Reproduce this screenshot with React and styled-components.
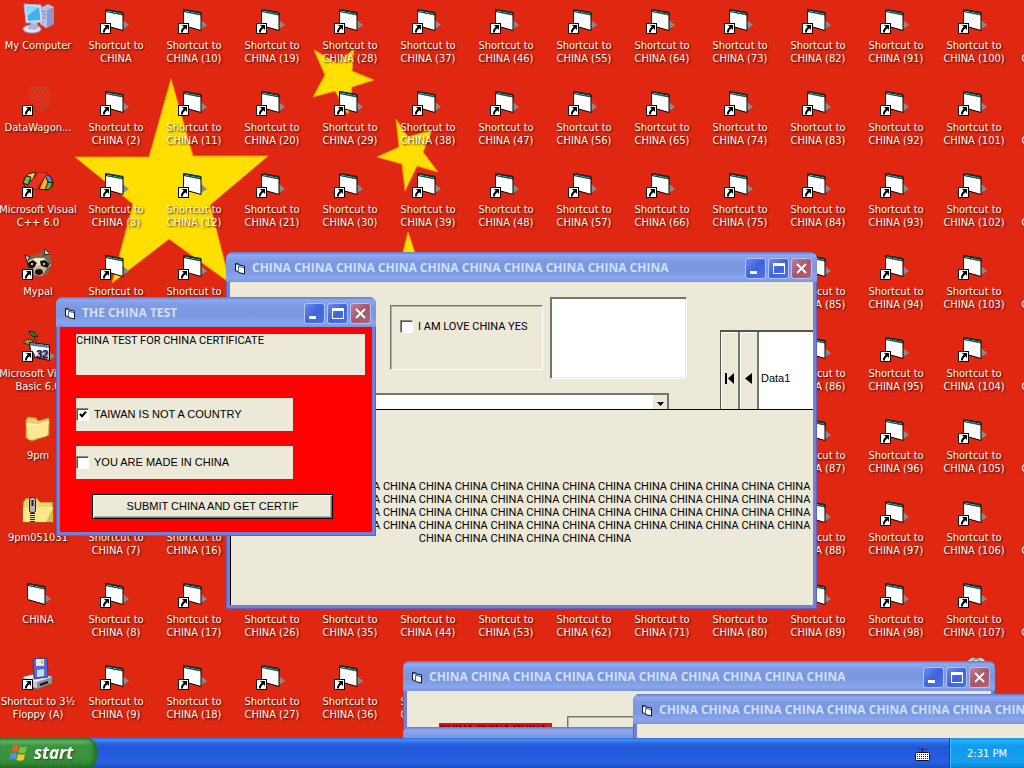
import React from "react";
import styled, { createGlobalStyle, css } from "styled-components";

const face = "#ece9d8";
const uiFont = `"Liberation Sans", Arial, sans-serif`;
const shellFont = `"DejaVu Sans Condensed", Tahoma, sans-serif`;
const captionFont = `"Open Sans", "Trebuchet MS", sans-serif`;

const GlobalStyle = createGlobalStyle`
  *, *::before, *::after { box-sizing: border-box; }
  body { margin: 0; }
  button, input, select { font: inherit; margin: 0; padding: 0; }
`;

/* ---------- shell ---------- */

const Screen = styled.div`
  height: 100vh;
  display: flex;
  flex-direction: column;
  overflow: hidden;
  font: 11px/13px ${shellFont};
`;

const Desktop = styled.main`
  position: relative;
  flex: 1;
  min-height: 0;
  overflow: hidden;
  background: #df2712;
`;

const Wallpaper = styled.svg`
  position: absolute;
  left: 0;
  top: 0;
  fill: #ffdf00;
  stroke: #f59a0c;
  stroke-width: 1;
`;

const IconGrid = styled.ul`
  position: relative;
  margin: 0 0 0 -1px;
  padding: 0;
  list-style: none;
  display: grid;
  grid-template-rows: repeat(9, 82px);
  grid-auto-columns: 78px;
  grid-auto-flow: column;
`;

const IconCell = styled.li`
  display: flex;
  flex-direction: column;
  align-items: center;
  gap: 5px;
  padding-top: 2px;
  color: #fffdf0;
  text-align: center;
  white-space: pre;
  text-shadow: 1px 1px 2px rgba(40, 0, 0, 0.9);
`;

/* ---------- windows ---------- */

const Frame = styled.section`
  position: absolute;
  left: ${(p) => p.$x}px;
  top: ${(p) => p.$y}px;
  width: ${(p) => p.$w}px;
  height: ${(p) => p.$h}px;
  display: flex;
  flex-direction: column;
  padding: 0 4px 4px;
  overflow: hidden;
  border-radius: 7px 7px 0 0;
  background: #7480d6;
  box-shadow: inset 1px 0 #5e62c0, inset -1px -1px #5e62c0;
  color: #000;
  font: 11px/13px ${uiFont};
`;

const TitleBar = styled.header`
  flex: none;
  height: 30px;
  margin: 0 -4px;
  padding: 2px 5px 0 8px;
  display: flex;
  align-items: center;
  gap: 6px;
  background: linear-gradient(#6478cc 0, #8ca8ee 3px, #7d99e2 9px, #7a96df 18px, #88a6ec 26px, #7c93de 30px);
`;

const Caption = styled.h1`
  flex: 1;
  min-width: 0;
  margin: 0;
  overflow: hidden;
  white-space: nowrap;
  color: #cfe0fa;
  font: bold 12px/16px ${captionFont};
`;

const CaptionButtons = styled.div`
  display: flex;
  gap: 2px;
`;

const CaptionButton = styled.button`
  width: 21px;
  height: 21px;
  display: grid;
  place-items: center;
  border: 1px solid #b4c4f2;
  border-radius: 3px;
  background: ${(p) =>
    p.$close
      ? "linear-gradient(135deg, #c08098, #a8546a 50%, #b06478)"
      : "linear-gradient(135deg, #6c8cea, #3f63dc 50%, #4a74e6)"};
`;

const Client = styled.div`
  flex: 1;
  min-height: 0;
  display: flex;
  flex-direction: column;
  overflow: hidden;
  background: ${face};
`;

/* ---------- controls ---------- */

const CheckLabel = styled.label`
  display: flex;
  align-items: center;
  gap: 5px;
  white-space: nowrap;
  ${(p) =>
    p.$panel &&
    css`
      width: 217px;
      height: 33px;
      background: ${face};
    `}
`;

const CheckBox = styled.input`
  appearance: none;
  position: relative;
  flex: none;
  width: 13px;
  height: 13px;
  border: 1px solid;
  border-color: #8a8878 #fff #fff #8a8878;
  background: #fff;
  box-shadow: inset 1px 1px #55534a;

  &:checked::after {
    content: "";
    position: absolute;
    left: 4px;
    top: 1px;
    width: 4px;
    height: 7px;
    border: solid #000;
    border-width: 0 2px 2px 0;
    transform: rotate(42deg);
  }
`;

/* THE CHINA TEST */

const TestForm = styled.form`
  flex: 1;
  display: flex;
  flex-direction: column;
  align-items: flex-start;
  gap: 15px;
  padding: 7px 7px 0 16px;
  background: #f00;
`;

const Notice = styled.div`
  align-self: stretch;
  height: 41px;
  margin-bottom: 8px;
  background: ${face};
  font-family: Roboto, ${uiFont};
`;

const SubmitButton = styled.button`
  width: 241px;
  height: 25px;
  margin-left: 16px;
  border: 1px solid #000;
  background: ${face};
  box-shadow: inset 1px 1px #fff, inset -1px -1px #77756a, inset -2px -2px #b5b2a2;
`;

/* main CHINA form */

const UpperPane = styled.div`
  flex: none;
  height: 127px;
  display: flex;
  align-items: flex-start;
  overflow: hidden;
`;

const InputColumn = styled.div`
  width: 457px;
  padding: 15px 0 0 70px;
`;

const InputRow = styled.div`
  display: flex;
  align-items: flex-start;
  justify-content: flex-end;
  gap: 7px;
`;

const GroupBox = styled.fieldset`
  min-width: 0;
  width: 153px;
  height: 65px;
  margin: 8px 0 0;
  padding: 14px 9px;
  border: 1px solid;
  border-color: #77756a #fff #fff #77756a;
  box-shadow: inset 1px 1px #b5b2a2;
  font-family: Roboto, ${uiFont};
`;

const TextBox = styled.input`
  width: 137px;
  height: 82px;
  border: 1px solid;
  border-color: #77756a #fff #fff #77756a;
  background: #fff;
  box-shadow: inset 1px 1px #77756a, inset -1px -1px #ece9d8;
`;

const Combo = styled.div`
  position: relative;
  margin: 14px 18px 0 0;
`;

const ComboSelect = styled.select`
  display: block;
  appearance: none;
  width: 100%;
  height: 22px;
  border: 2px solid;
  border-color: #77756a #77756a #fff #77756a;
  border-radius: 0;
  background: linear-gradient(to left, ${face} 14px, #fff 14px);
`;

const ComboArrow = styled.svg`
  position: absolute;
  right: 5px;
  top: 9px;
  pointer-events: none;
`;

const DataControl = styled.div`
  flex: 1;
  height: 95px;
  margin: 48px 0 0 33px;
  display: flex;
  align-items: stretch;
  border: solid #55534a;
  border-width: 2px 0 0 1px;
  background: #fff;
`;

const DataButton = styled.button`
  width: 19px;
  display: grid;
  place-items: center;
  border: 0;
  border-right: 2px solid #77756a;
  background: ${face};
  box-shadow: inset 1px 1px #fff;
`;

const DataName = styled.span`
  align-self: center;
  padding-left: 2px;
`;

const PictureBox = styled.div`
  flex: 1;
  border: solid #000;
  border-width: 1px 0 0 1px;
  padding: 70px 0 0;
`;

const Slogan = styled.p`
  width: 582px;
  margin: 0 0 0 3px;
  text-align: center;
  font-family: Roboto, ${uiFont};
`;

/* lower windows */

const LowerRow = styled.div`
  display: flex;
  gap: 15px;
  padding: 25px 0 0 32px;
`;

const RedLabel = styled.div`
  width: 113px;
  height: 40px;
  margin-top: 7px;
  background: #d3161c;
`;

const GroovePanel = styled.div`
  width: 160px;
  height: 65px;
  border: 1px solid;
  border-color: #77756a #fff #fff #77756a;
  box-shadow: inset 1px 1px #b5b2a2;
`;

/* ---------- taskbar ---------- */

const Taskbar = styled.footer`
  flex: none;
  height: 30px;
  display: flex;
  align-items: stretch;
  background: linear-gradient(#2e6be0 0, #428df5 2px, #2c68e4 5px, #2257d8 9px, #2460e0 24px, #1f4fc0 30px);
`;

const StartButton = styled.button`
  width: 97px;
  display: flex;
  align-items: center;
  gap: 4px;
  padding: 0 0 1px 9px;
  border: 0;
  border-radius: 0 10px 10px 0;
  background: linear-gradient(#2f7a30 0, #66b468 3px, #3c9440 8px, #37923a 22px, #2a7429 30px);
  box-shadow: inset -3px 0 4px #226a24;
  color: #fff;
  font: italic bold 17px/22px ${captionFont};
  text-shadow: 1px 1px 2px #1c4a1c;
`;

const LanguageBar = styled.div`
  margin-left: auto;
  display: flex;
  align-items: center;
  padding: 3px 19px 0 0;
`;

const Tray = styled.div`
  width: 75px;
  display: grid;
  place-items: center;
  border-left: 1px solid #0b3aa0;
  background: linear-gradient(#1a8fe8 0, #22b4f6 3px, #119aee 8px, #12a0ee 24px, #0f80d0 30px);
  box-shadow: inset 1px 0 #3cc0f8;
  color: #fff;
`;

/* ---------- drawings ---------- */

const ShortcutArrow = () => (
  <g>
    <rect x="0.5" y="21.5" width="10" height="10" fill="#fff" stroke="#000" />
    <path d="M4 23h5v5l-1.700-1.700C6 27.500 5 28.500 4.800 30.500H3C2.800 28 4 26.300 5.700 24.700z" fill="#000" />
  </g>
);

const FormGlyph = () => (
  <g>
    <path d="M23 18l6 5-6 4z" fill="#8c8c8c" />
    <path d="M5.500 7.500L23 10.500v18L5.500 23.500z" fill="#fff" stroke="#000" />
    <path d="M5.500 7L23 10.500v3L5.500 10z" fill="#10302c" />
    <path d="M7 9l15 3" stroke="#3fae8c" strokeWidth="1" strokeDasharray="5 1" />
  </g>
);

const glyphs = {
  form: <FormGlyph />,
  computer: (
    <g>
      <path d="M18 6l8-4 6 3v17l-8 4-6-4z" fill="#b9bfe4" />
      <path d="M25 8l7-3v17l-7 4z" fill="#8f96c8" />
      <path d="M19 9l5 1M19 12l5 1M19 15l5 1" stroke="#7d84b8" />
      <path d="M2 2l17 1 2 17-17 1z" fill="#dfe3f4" stroke="#a3a9d0" />
      <path d="M4 4l13 1 1.500 13L6 19z" fill="#3fb2f2" />
      <path d="M4 4l13 1-12 9z" fill="#90d8fb" />
      <path d="M9 20h6l1 4H8z" fill="#bcc2de" />
      <ellipse cx="10" cy="27" rx="9" ry="4" fill="#dfe3f2" stroke="#9aa0c8" />
      <ellipse cx="11" cy="25.500" rx="5" ry="2" fill="#aab2d8" />
    </g>
  ),
  dotted: (
    <g fill="none" stroke="#b85c48" strokeWidth="1" strokeDasharray="1 1">
      <path d="M8 4h18M6 6h22M7 8h22M5 10h23M8 12h21M7 14h22M9 16h20M10 18h17M13 20h15M14 22h12M16 24h10M15 26h7" />
    </g>
  ),
  vcpp: (
    <g stroke="#201008" strokeWidth="1">
      <path d="M1 17l5-9 8-2-4 9z" fill="#ffcf3d" />
      <path d="M1 17l5 8 5-7-3-6z" fill="#3a78d8" />
      <path d="M4 10l5 1-3 8-5-2z" fill="#6cc23c" />
      <path d="M17 23l6-13 6 3 2 6-6 5z" fill="#f6b52c" />
      <path d="M22 7l7 4 2 6-5-1z" fill="#4a8ae0" />
      <path d="M26 16l5 1-3 6-5 1z" fill="#5cb83c" />
      <path d="M5 20L17 6l9 1L14 24z" fill="#e8341c" stroke="#a01808" />
    </g>
  ),
  raccoon: (
    <g>
      <path d="M3 7l6 1 9-3 5-4 5 4 2 12-5 9-11 3-8-8z" fill="#7b664e" />
      <path d="M3 7l5 2-3 5zM23 1l5 5-6 1z" fill="#d8cdb6" stroke="#2c2018" />
      <path d="M6 13l7-3 9 0 7 7-6 4-9-2-8 1z" fill="#efe6d2" />
      <path d="M5 15l6-3 4 3-3 5-6 0zM18 13l5-1 5 4-3 4-6-2z" fill="#171310" />
      <path d="M11 20l6-3 8 3-5 8-7-1z" fill="#c9b795" />
      <ellipse cx="17" cy="24" rx="4" ry="3" fill="#1b1512" />
      <circle cx="10" cy="16" r="1" fill="#fff" />
      <circle cx="22" cy="16" r="1" fill="#fff" />
    </g>
  ),
  vb: (
    <g>
      <path d="M6 1l6 1 4 5-6-1z" fill="#2f7a34" stroke="#0f3010" />
      <path d="M1 12l5-3 6 2-5 4z" fill="#9a9a44" stroke="#30300c" />
      <path d="M12 7l3 5" stroke="#30300c" />
      <path d="M27 22l6 4-5 4z" fill="#8c8c8c" />
      <path d="M7.500 12.500L27.500 15v15.500L9 26z" fill="#fff" stroke="#000" />
      <path d="M8 13l19 2.500v2.500L8 15.500z" fill="#3c8c9c" />
      <path d="M10 22c4 0 4 8 0 9z" fill="#902040" />
      <text x="14" y="28" fontFamily="Liberation Sans, sans-serif" fontWeight="bold" fontSize="11" fill="#101878">
        32
      </text>
    </g>
  ),
  folder: (
    <g>
      <path d="M4 8l2-3 8 1 2 3 11-3v17L10 29 4 26z" fill="#f2cc62" stroke="#b98f2c" />
      <path d="M4 11l12 1 11-3-2 15-18 4z" fill="#fde793" />
      <path d="M5 12l11 1 10-3" stroke="#fff8cc" fill="none" />
    </g>
  ),
  zip: (
    <g>
      <path d="M1 8l3-4h11l3 4h13v20H1z" fill="#f3d56a" stroke="#8c6c1c" />
      <path d="M1 13h30v15H1z" fill="#fbe78c" />
      <path d="M24 28l7-14v14z" fill="#dcb848" />
      <rect x="7.500" y="3.500" width="6" height="15" rx="2" fill="#b4b4b4" stroke="#202020" />
      <path d="M10.500 6v6" stroke="#222" strokeWidth="2" />
      <path d="M10.500 19v10" stroke="#222" strokeWidth="5" strokeDasharray="1 1" />
    </g>
  ),
  floppy: (
    <g>
      <path d="M1 19l17-5 12 5v6l-15 6-14-5z" fill="#c9c9d2" stroke="#5c5c66" />
      <path d="M1 19l14 5 15-5-12-4z" fill="#efeff4" />
      <path d="M15 24v7l15-6v-6z" fill="#8f8f99" />
      <path d="M18 27l8-3" stroke="#111" strokeWidth="2" />
      <circle cx="28" cy="24" r="1" fill="#4ce04c" />
      <path d="M11 1l14-1 1 19-14 2z" fill="#5a68cc" stroke="#343c8c" />
      <path d="M14 1h8v7h-8z" fill="#e2e6f6" />
      <path d="M19 2h2v4h-2z" fill="#d8d020" />
      <path d="M15 12l7-1v7l-7 1z" fill="#bfe0f4" />
    </g>
  ),
  bin: (
    <g>
      <path d="M10 3l4-3 5 1 4-1 3 2 2 3v19H10z" fill="#dfe6ea" stroke="#a8b0b4" />
      <path d="M14 3l4-2 5 2" stroke="#5a8c78" fill="none" />
    </g>
  ),
};

const DesktopGlyph = ({ kind, shortcut }) => (
  <svg width="32" height="32" viewBox="0 0 32 32" overflow="visible" fill="none" aria-hidden="true">
    {glyphs[kind]}
    {shortcut && <ShortcutArrow />}
  </svg>
);

const WindowGlyph = () => (
  <svg width="12" height="13" viewBox="0 0 12 13" fill="none" aria-hidden="true">
    <path d="M1.500 1.500L5 2v1l5.500 1v8L4.500 10.500v-1l-3-.5z" fill="#fff" stroke="#0c1434" />
    <path d="M2 2.500l3 .5M5 4.500l5 1" stroke="#1c6c80" />
    <path d="M4.500 4v6" stroke="#5c6c88" />
  </svg>
);

const FlagLogo = () => (
  <svg width="21" height="20" viewBox="0 0 21 20" aria-hidden="true">
    <path d="M4 3c3-1.500 4-1 6 0L8.500 9C6.500 8 5 8 2.500 9z" fill="#f0592a" />
    <path d="M11 3.500c2 1 4 1.200 7 0L16.500 9.500c-2.500 1-4.500 1-7 0z" fill="#7cc242" />
    <path d="M2 10.500c2.500-1 4-1 6 0L6.500 16.500c-2-1-4-1-6 0z" fill="#5a8cf0" />
    <path d="M9 11c2.500 1 4.500 1 7 0l-1.500 6c-2.500 1-4.500 1-7 0z" fill="#fbc62a" />
  </svg>
);

const KeyboardGlyph = () => (
  <svg width="15" height="15" viewBox="0 0 15 15" fill="none" aria-label="Keyboard" role="img">
    <path d="M4 1l2 2 2-2 2 2 2-2" stroke="#0c1030" strokeDasharray="1 1" />
    <path d="M7.500 2v3" stroke="#0c1030" />
    <rect x=".5" y="5.500" width="14" height="8" rx="1" fill="#fff" stroke="#0c1030" />
    <path d="M2 7.500h11M2 9.500h11M2 11.500h11" stroke="#301828" strokeDasharray="1 1" />
  </svg>
);

/* ---------- composition ---------- */

const firstColumn = [
  { kind: "computer", label: "My Computer" },
  { kind: "dotted", label: "DataWagon...", shortcut: true },
  { kind: "vcpp", label: "Microsoft Visual\nC++ 6.0", shortcut: true },
  { kind: "raccoon", label: "Mypal", shortcut: true },
  { kind: "vb", label: "Microsoft Visual\nBasic 6.0", shortcut: true },
  { kind: "folder", label: "9pm" },
  { kind: "zip", label: "9pm051031" },
  { kind: "form", label: "CHINA" },
  { kind: "floppy", label: "Shortcut to 3½\nFloppy (A)", shortcut: true },
];

const shortcuts = Array.from({ length: 116 }, (_, i) => ({
  kind: "form",
  label: i === 0 ? "Shortcut to\nCHINA" : `Shortcut to\nCHINA (${i + 1})`,
  shortcut: true,
}));

const icons = [
  ...firstColumn,
  ...shortcuts.slice(0, 107),
  { kind: "bin", label: "Recycle Bin" },
  ...shortcuts.slice(107),
];

const china = (n) => Array(n).fill("CHINA").join(" ");

const Window = ({ title, children, ...box }) => (
  <Frame {...box}>
    <TitleBar>
      <WindowGlyph />
      <Caption>{title}</Caption>
      <CaptionButtons>
        <CaptionButton aria-label="Minimize">
          <svg width="15" height="15" aria-hidden="true">
            <path d="M2 10h7v3H2z" fill="#fff" />
          </svg>
        </CaptionButton>
        <CaptionButton aria-label="Maximize">
          <svg width="15" height="15" aria-hidden="true">
            <path d="M2 2h12v11H2zM3 5v7h10V5z" fill="#fff" fillRule="evenodd" />
          </svg>
        </CaptionButton>
        <CaptionButton $close aria-label="Close">
          <svg width="15" height="15" aria-hidden="true">
            <path d="M3 3l9 9M12 3l-9 9" stroke="#fff" strokeWidth="2" />
          </svg>
        </CaptionButton>
      </CaptionButtons>
    </TitleBar>
    <Client>{children}</Client>
  </Frame>
);

export default function App() {
  return (
    <Screen>
      <GlobalStyle />
      <Desktop>
        <Wallpaper width="480" height="300" aria-hidden="true">
          <path d="M171 79l22 77h75l-58 49 20 78-61-44-57 44 21-79-58-47h74z" />
          <path d="M314 50l23 13 17-14-2 22 22 9-22 7-4 27-13-23-22 6 12-22z" />
          <path d="M396 119l12 18 24-7-9 22 15 20-21-6-12 25-3-27-25-7 22-10z" />
          <path d="M408 232l8 24h-14z" />
        </Wallpaper>
        <IconGrid>
          {icons.map((icon) => (
            <IconCell key={icon.label}>
              <DesktopGlyph kind={icon.kind} shortcut={icon.shortcut} />
              <span>{icon.label}</span>
            </IconCell>
          ))}
        </IconGrid>

        <Window title={china(10)} $x={403} $y={661} $w={592} $h={358}>
          <LowerRow>
            <RedLabel>{china(3)}</RedLabel>
            <GroovePanel />
          </LowerRow>
        </Window>
        <Window $x={403} $y={727} $w={592} $h={358} />
        <Window title={china(10)} $x={633} $y={694} $w={592} $h={358} />

        <Window title={china(10)} $x={226} $y={252} $w={591} $h={357}>
          <UpperPane>
            <InputColumn>
              <InputRow>
                <GroupBox>
                  <CheckLabel>
                    <CheckBox type="checkbox" />
                    I AM LOVE CHINA YES
                  </CheckLabel>
                </GroupBox>
                <TextBox type="text" aria-label="Text" />
              </InputRow>
              <Combo>
                <ComboSelect aria-label="Choice">
                  <option></option>
                </ComboSelect>
                <ComboArrow width="7" height="4" aria-hidden="true">
                  <path d="M0 0h7L3.500 4z" />
                </ComboArrow>
              </Combo>
            </InputColumn>
            <DataControl>
              <DataButton aria-label="First record">
                <svg width="10" height="11" aria-hidden="true">
                  <path d="M0 0h2v11H0zM9 0v11L3 5.500z" />
                </svg>
              </DataButton>
              <DataButton aria-label="Previous record">
                <svg width="7" height="11" aria-hidden="true">
                  <path d="M7 0v11L0 5.500z" />
                </svg>
              </DataButton>
              <DataName>Data1</DataName>
            </DataControl>
          </UpperPane>
          <PictureBox>
            <Slogan>{china(70)}</Slogan>
          </PictureBox>
        </Window>

        <Window title="THE CHINA TEST" $x={56} $y={297} $w={320} $h={239}>
          <TestForm onSubmit={(e) => e.preventDefault()}>
            <Notice>CHINA TEST FOR CHINA CERTIFICATE</Notice>
            <CheckLabel $panel>
              <CheckBox type="checkbox" defaultChecked />
              TAIWAN IS NOT A COUNTRY
            </CheckLabel>
            <CheckLabel $panel>
              <CheckBox type="checkbox" />
              YOU ARE MADE IN CHINA
            </CheckLabel>
            <SubmitButton type="submit">SUBMIT CHINA AND GET CERTIF</SubmitButton>
          </TestForm>
        </Window>
      </Desktop>

      <Taskbar>
        <StartButton>
          <FlagLogo />
          start
        </StartButton>
        <LanguageBar>
          <KeyboardGlyph />
        </LanguageBar>
        <Tray>
          <time>2:31 PM</time>
        </Tray>
      </Taskbar>
    </Screen>
  );
}
